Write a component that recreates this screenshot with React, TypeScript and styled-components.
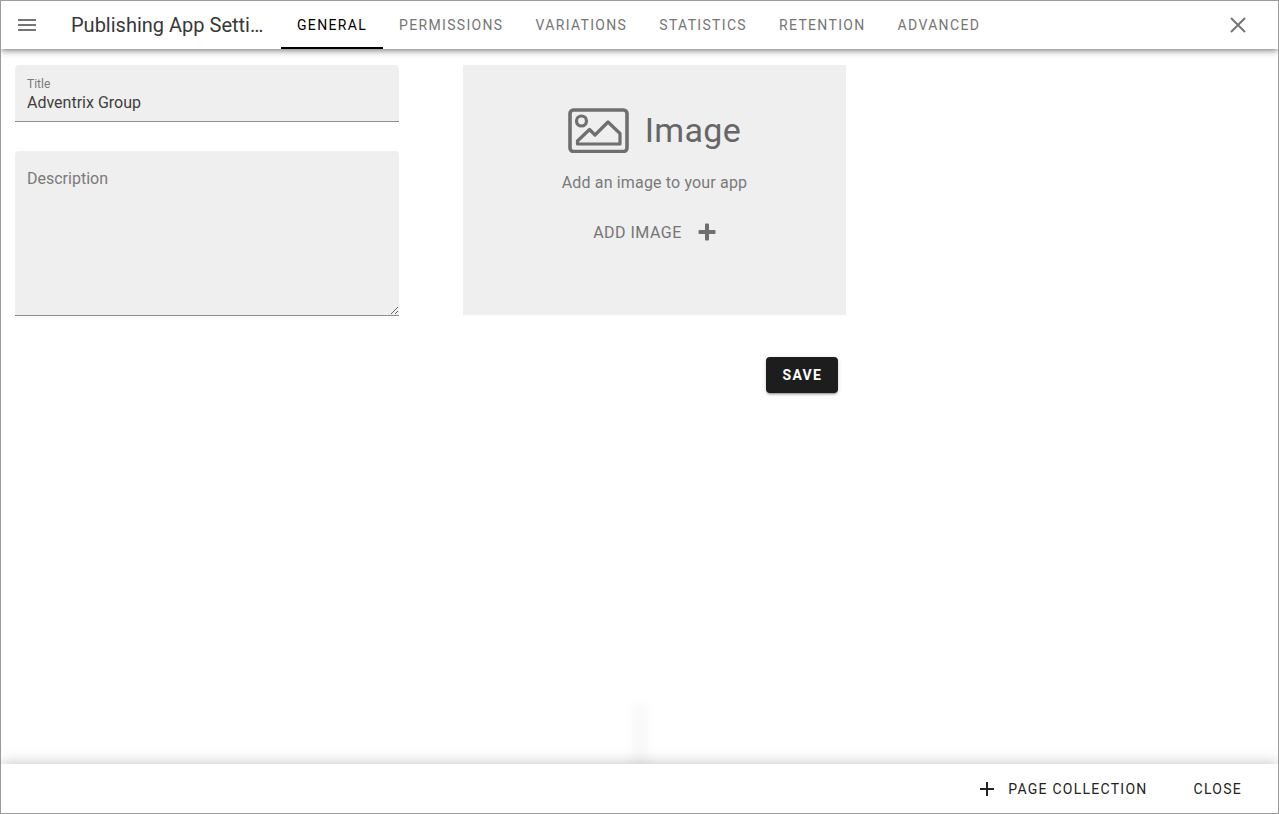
import React, { useState } from "react";
import styled, { createGlobalStyle } from "styled-components";

const GlobalStyle = createGlobalStyle`
  *, *::before, *::after { box-sizing: border-box; }
  body { margin: 0; background: #fff; font-family: Roboto, "Liberation Sans", sans-serif; }
  button, input, textarea { font-family: inherit; margin: 0; }
`;

const Frame = styled.div`
  display: flex;
  flex-direction: column;
  min-height: 100vh;
  border: 1px solid #9b9b9b;
  background: #fff;
`;

const Header = styled.header`
  display: flex;
  align-items: stretch;
  height: 48px;
  padding-right: 16px;
  background: #fff;
  box-shadow: 0 2px 4px -1px rgba(0, 0, 0, 0.3), 0 4px 5px rgba(0, 0, 0, 0.14),
    0 1px 10px rgba(0, 0, 0, 0.12);
  clip-path: inset(0 0 -20px 0);
`;

const IconButton = styled.button`
  display: flex;
  align-items: center;
  justify-content: center;
  width: 48px;
  padding: 0;
  border: 0;
  background: none;
  color: #757575;
  cursor: pointer;
`;

const MenuButton = styled(IconButton)`
  width: 52px;
`;

const Heading = styled.h1`
  width: 194px;
  margin: 0 16px 0 18px;
  overflow: hidden;
  color: #383838;
  font-size: 20px;
  font-weight: 400;
  line-height: 48px;
  text-overflow: ellipsis;
  white-space: nowrap;
`;

const Tabs = styled.nav`
  display: flex;
  flex: 1;
`;

const Tab = styled.button<{ $active: boolean }>`
  padding: 2px 16px 0;
  border: 0;
  border-bottom: 2px solid ${(p) => (p.$active ? "#000" : "transparent")};
  background: none;
  color: ${(p) => (p.$active ? "#000" : "#757575")};
  font-size: 14px;
  font-weight: 400;
  letter-spacing: 0.095em;
  text-transform: uppercase;
  cursor: pointer;
`;

const Main = styled.main`
  display: grid;
  grid-template-columns: 30vw 30vw;
  column-gap: 5vw;
  row-gap: 41px;
  flex: 1;
  align-content: start;
  padding: 16px 14px;
`;

const Fields = styled.div`
  display: flex;
  flex-direction: column;
  gap: 29px;
`;

const Field = styled.div`
  display: flex;
  flex-direction: column;
  border-bottom: 1px solid #8e8e8e;
  border-radius: 4px 4px 0 0;
  background: #efefef;
`;

const SmallLabel = styled.label`
  padding: 11px 12px 0;
  color: #7a7a7a;
  font-size: 12px;
  line-height: 16px;
`;

const TextInput = styled.input`
  height: 29px;
  padding: 0 12px 8px;
  border: 0;
  outline: 0;
  background: none;
  color: #404040;
  font-size: 16px;
`;

const Label = styled.label`
  padding: 16px 12px 0;
  color: #7a7a7a;
  font-size: 16px;
  line-height: 24px;
`;

const TextArea = styled.textarea`
  display: block;
  width: 100%;
  height: 124px;
  padding: 0 12px;
  border: 0;
  outline: 0;
  background: none;
  color: #404040;
  font-size: 16px;
  line-height: 24px;
  resize: vertical;
`;

const ImageCard = styled.section`
  display: flex;
  flex-direction: column;
  align-items: center;
  height: 250px;
  padding-top: 40px;
  background: #efefef;
  color: #666;
`;

const ImageTitle = styled.h2`
  display: flex;
  align-items: center;
  gap: 16px;
  margin: 0;
  color: #666;
  font-size: 34px;
  font-weight: 400;
  letter-spacing: 0.01em;
  line-height: 50px;
`;

const Hint = styled.p`
  margin: 16px 0 0;
  color: #7a7a7a;
  font-size: 16px;
  letter-spacing: 0.01em;
  line-height: 24px;
`;

const AddButton = styled.button`
  display: flex;
  align-items: center;
  gap: 16px;
  height: 36px;
  margin-top: 19px;
  padding: 0;
  border: 0;
  background: none;
  color: #757575;
  font-size: 16px;
  letter-spacing: 0.03em;
  text-transform: uppercase;
  cursor: pointer;
`;

const Actions = styled.div`
  display: flex;
  grid-column: 2;
  justify-content: flex-end;
  padding-right: 8px;
`;

const SaveButton = styled.button`
  height: 36px;
  padding: 0 16px;
  border: 0;
  border-radius: 4px;
  background: #1d1d1d;
  box-shadow: 0 3px 1px -2px rgba(0, 0, 0, 0.2), 0 2px 2px rgba(0, 0, 0, 0.14),
    0 1px 5px rgba(0, 0, 0, 0.12);
  color: #fff;
  font-size: 14px;
  font-weight: 700;
  letter-spacing: 0.095em;
  text-transform: uppercase;
  cursor: pointer;
`;

const Footer = styled.footer`
  position: relative;
  display: flex;
  align-items: center;
  justify-content: flex-end;
  gap: 14px;
  height: 49px;
  padding-right: 20px;
  background: #fff;
  box-shadow: 0 0 14px rgba(0, 0, 0, 0.25);
  clip-path: inset(-80px 0 0 0);
`;

const Shade = styled.div`
  position: absolute;
  bottom: 100%;
  left: 50%;
  width: 0;
  height: 56px;
  box-shadow: 0 0 14px 4px rgba(0, 0, 0, 0.06);
  clip-path: inset(-30px -30px 0 -30px);
`;

const FooterButton = styled.button`
  display: flex;
  align-items: center;
  gap: 14px;
  height: 36px;
  padding: 0 16px;
  border: 0;
  background: none;
  color: #222;
  font-size: 14px;
  font-weight: 400;
  letter-spacing: 0.09em;
  text-transform: uppercase;
  cursor: pointer;
`;

const tabs = ["General", "Permissions", "Variations", "Statistics", "Retention", "Advanced"];

const MenuIcon = () => (
  <svg width="18" height="12" viewBox="0 0 18 12" fill="currentColor" aria-hidden="true">
    <path d="M0 0h18v2H0zM0 5h18v2H0zM0 10h18v2H0z" />
  </svg>
);

const CloseIcon = () => (
  <svg width="16" height="16" viewBox="0 0 16 16" fill="none" stroke="currentColor" strokeWidth="2" aria-hidden="true">
    <path d="M1 1l14 14M15 1L1 15" />
  </svg>
);

const PictureIcon = () => (
  <svg width="61" height="46" viewBox="0 0 61 46" fill="none" stroke="#6f6f6f" aria-hidden="true">
    <rect x="2" y="3" width="57" height="41.500" rx="3.500" strokeWidth="3.6" />
    <circle cx="13.5" cy="14" r="5" strokeWidth="3.2" />
    <path d="M9.500 37v-3L21.500 22.500l5.500 5.500L40 15l12 11.500V37z" strokeWidth="3.2" strokeLinejoin="round" />
  </svg>
);

const BoldPlusIcon = () => (
  <svg width="18" height="18" viewBox="0 0 18 18" fill="#6f6f6f" aria-hidden="true">
    <path d="M8 0.500h2q1 0 1 1V7h5.500q1 0 1 1v2q0 1-1 1H11v5.500q0 1-1 1H8q-1 0-1-1V11H1.500q-1 0-1-1V8q0-1 1-1H7V1.500q0-1 1-1z" />
  </svg>
);

const PlusIcon = () => (
  <svg width="14" height="14" viewBox="0 0 14 14" fill="currentColor" aria-hidden="true">
    <path d="M6 0h2v6h6v2H8v6H6V8H0V6h6z" />
  </svg>
);

export default function App() {
  const [active, setActive] = useState("General");
  return (
    <Frame>
      <GlobalStyle />
      <Header>
        <MenuButton type="button" aria-label="Menu">
          <MenuIcon />
        </MenuButton>
        <Heading>Publishing App Settings</Heading>
        <Tabs>
          {tabs.map((t) => (
            <Tab key={t} type="button" $active={t === active} onClick={() => setActive(t)}>
              {t}
            </Tab>
          ))}
        </Tabs>
        <IconButton type="button" aria-label="Close settings">
          <CloseIcon />
        </IconButton>
      </Header>
      <Main>
        <Fields>
          <Field>
            <SmallLabel htmlFor="title">Title</SmallLabel>
            <TextInput id="title" type="text" defaultValue="Adventrix Group" />
          </Field>
          <Field>
            <Label htmlFor="description">Description</Label>
            <TextArea id="description" />
          </Field>
        </Fields>
        <ImageCard>
          <ImageTitle>
            <PictureIcon />
            Image
          </ImageTitle>
          <Hint>Add an image to your app</Hint>
          <AddButton type="button">
            Add image
            <BoldPlusIcon />
          </AddButton>
        </ImageCard>
        <Actions>
          <SaveButton type="button">Save</SaveButton>
        </Actions>
      </Main>
      <Footer>
        <Shade />
        <FooterButton type="button">
          <PlusIcon />
          Page collection
        </FooterButton>
        <FooterButton type="button">Close</FooterButton>
      </Footer>
    </Frame>
  );
}
